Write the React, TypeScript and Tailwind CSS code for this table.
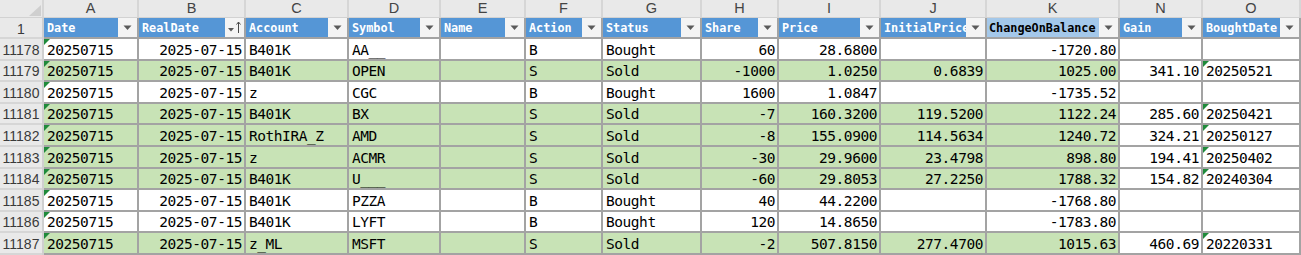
import clsx from 'clsx'

const letters = ['A', 'B', 'C', 'D', 'E', 'F', 'G', 'H', 'I', 'J', 'K', 'N', 'O']
const headers = ['Date', 'RealDate', 'Account', 'Symbol', 'Name', 'Action', 'Status', 'Share', 'Price', 'InitialPrice', 'ChangeOnBalance', 'Gain', 'BoughtDate']
// r = right aligned (numbers / dates), l = text
const align = ['l', 'r', 'l', 'l', 'l', 'l', 'l', 'r', 'r', 'r', 'r', 'r', 'l']

type Row = { n: string; sold: boolean; cells: string[] }

const rows: Row[] = [
  { n: '11178', sold: false, cells: ['20250715', '2025-07-15', 'B401K', 'AA__', '', 'B', 'Bought', '60', '28.6800', '', '-1720.80', '', ''] },
  { n: '11179', sold: true, cells: ['20250715', '2025-07-15', 'B401K', 'OPEN', '', 'S', 'Sold', '-1000', '1.0250', '0.6839', '1025.00', '341.10', '20250521'] },
  { n: '11180', sold: false, cells: ['20250715', '2025-07-15', 'z', 'CGC', '', 'B', 'Bought', '1600', '1.0847', '', '-1735.52', '', ''] },
  { n: '11181', sold: true, cells: ['20250715', '2025-07-15', 'B401K', 'BX', '', 'S', 'Sold', '-7', '160.3200', '119.5200', '1122.24', '285.60', '20250421'] },
  { n: '11182', sold: true, cells: ['20250715', '2025-07-15', 'RothIRA_Z', 'AMD', '', 'S', 'Sold', '-8', '155.0900', '114.5634', '1240.72', '324.21', '20250127'] },
  { n: '11183', sold: true, cells: ['20250715', '2025-07-15', 'z', 'ACMR', '', 'S', 'Sold', '-30', '29.9600', '23.4798', '898.80', '194.41', '20250402'] },
  { n: '11184', sold: true, cells: ['20250715', '2025-07-15', 'B401K', 'U___', '', 'S', 'Sold', '-60', '29.8053', '27.2250', '1788.32', '154.82', '20240304'] },
  { n: '11185', sold: false, cells: ['20250715', '2025-07-15', 'B401K', 'PZZA', '', 'B', 'Bought', '40', '44.2200', '', '-1768.80', '', ''] },
  { n: '11186', sold: false, cells: ['20250715', '2025-07-15', 'B401K', 'LYFT', '', 'B', 'Bought', '120', '14.8650', '', '-1783.80', '', ''] },
  { n: '11187', sold: true, cells: ['20250715', '2025-07-15', 'z_ML', 'MSFT', '', 'S', 'Sold', '-2', '507.8150', '277.4700', '1015.63', '460.69', '20220331'] },
]

function FilterButton({ sorted }: { sorted?: boolean }) {
  return (
    <span className="absolute right-0 top-0 h-full w-[19px] bg-[#f4f4f4]">
      {sorted ? (
        <svg width="19" height="19" viewBox="0 0 19 19" className="block">
          <path d="M3 10h6l-3 3.5z" fill="#5a5a5a" />
          <path d="M13.5 15V4M11.5 6.5l2-2.5 2 2.5" stroke="#4a4a4a" strokeWidth="1" fill="none" />
        </svg>
      ) : (
        <svg width="19" height="19" viewBox="0 0 19 19" className="block">
          <path d="M5.5 7.5h8l-4 4.5z" fill="#5a5a5a" />
        </svg>
      )}
    </span>
  )
}

function ErrorMark() {
  return (
    <svg width="6" height="6" viewBox="0 0 6 6" className="absolute left-0 top-0">
      <path d="M0 0h6L0 6z" fill="#1f8a3a" />
    </svg>
  )
}

export default function App() {
  return (
    <div className="w-[1301px] h-[255px] overflow-hidden bg-white font-['DejaVu_Sans_Mono',monospace]">
      {/* column letters */}
      <div className="grid h-[18px] grid-cols-[42px_93px_105px_101px_90px_83px_75px_97px_75px_100px_104px_131px_81px_96px] gap-x-[2px] border-b border-[#d2d2d2] bg-[#d6d6d6] pr-[2px] font-['Liberation_Sans',sans-serif] text-[14.5px] text-[#444]">
        <div className="relative bg-[#e9e9e9]">
          <svg width="12" height="11" viewBox="0 0 12 11" className="absolute bottom-[1px] right-[1px]">
            <path d="M12 0v11H0z" fill="#cfcfcf" />
          </svg>
        </div>
        {letters.map((l) => (
          <div key={l} className="flex items-center justify-center bg-[#e9e9e9] leading-none">
            {l}
          </div>
        ))}
      </div>

      <div className="flex">
        {/* row numbers */}
        <div className="flex w-[44px] shrink-0 flex-col gap-[2px] border-r-2 border-[#cfcfcf] bg-[#d6d6d6] pb-[2px] font-['Liberation_Sans',sans-serif] text-[14px] text-[#3a3a3a]">
          <div className="flex h-[19px] items-end justify-center bg-[#e9e9e9] pb-[1px] leading-none">1</div>
          {rows.map((r) => (
            <div key={r.n} className="flex h-[19.6px] items-end justify-center bg-[#e9e9e9] pb-[2px] leading-none">
              {r.n}
            </div>
          ))}
        </div>

        {/* sheet */}
        <div className="grid grid-cols-[93px_105px_101px_90px_83px_75px_97px_75px_100px_104px_131px_81px_96px] gap-[2px] bg-[#a3a3a3] pr-[2px] pb-[2px]">
          {headers.map((h, i) => (
            <div
              key={h}
              className={clsx(
                'relative flex h-[19px] items-end overflow-hidden whitespace-nowrap pb-[2px] text-[11.8px] font-bold leading-none',
                i === 10 ? 'bg-[#a4c8ea] pl-[2px] text-black' : 'bg-[#5596d6] pl-[3px] text-white'
              )}
            >
              {h}
              <FilterButton sorted={i === 1} />
            </div>
          ))}

          {rows.map((r) =>
            r.cells.map((v, i) => (
              <div
                key={r.n + i}
                className={clsx(
                  'relative flex h-[19.6px] items-end overflow-hidden whitespace-nowrap text-[14.5px] leading-[17px] tracking-[-0.45px] text-black',
                  align[i] === 'r' ? 'justify-end pr-[2px]' : 'pl-[3px]',
                  r.sold && i < 11 ? 'bg-[#c8e3b6]' : 'bg-white'
                )}
              >
                {(i === 0 || (i === 12 && v)) && <ErrorMark />}
                {v}
              </div>
            ))
          )}
        </div>
      </div>
    </div>
  )
}
